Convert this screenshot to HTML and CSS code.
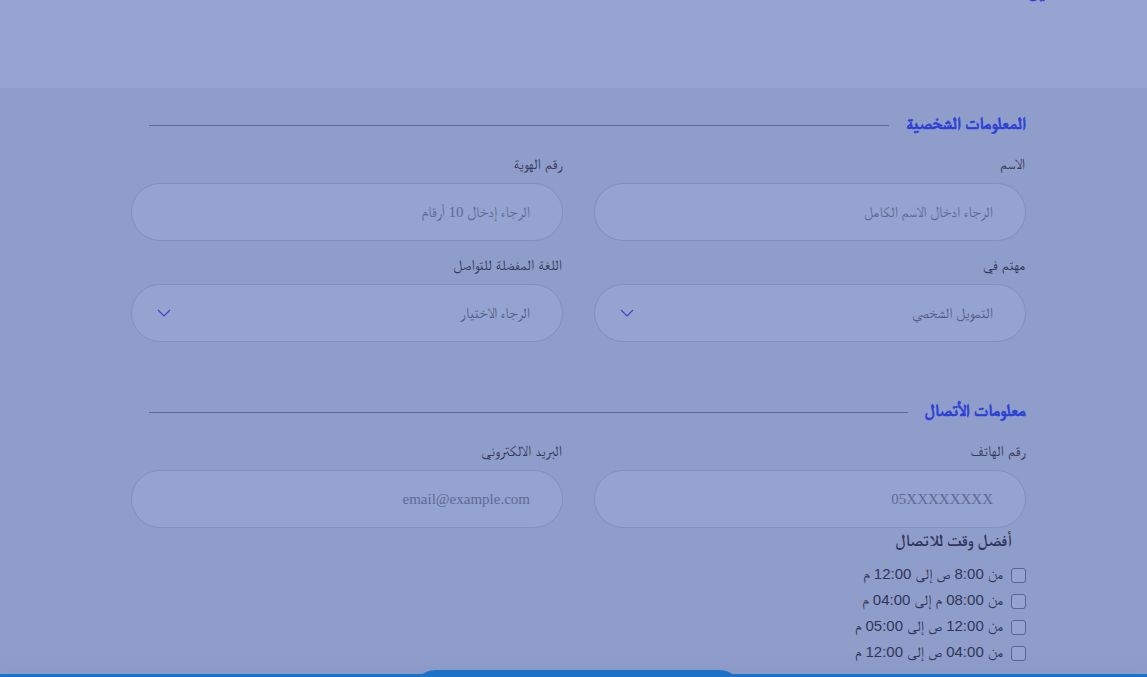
FILE: index.html
```html
<!DOCTYPE html>
<html lang="ar" dir="rtl">
<head>
    <meta charset="utf-8">
    <title>طلب تمويل</title>
    <link rel="stylesheet" href="styles.css">
</head>
<body>
<header class="top">
    <h1 class="top-title">التسجيل</h1>
</header>
<main class="form-wrap">
    <section class="group">
        <div class="group-head"><h2>المعلومات الشخصية</h2><span class="rule"></span></div>
        <div class="grid">
            <div class="field">
                <label for="fullName">الاسم</label>
                <input type="text" id="fullName" class="input" placeholder="الرجاء ادخال الاسم الكامل">
            </div>
            <div class="field">
                <label for="idNo">رقم الهوية</label>
                <input type="text" id="idNo" class="input" placeholder="الرجاء إدخال 10 أرقام">
            </div>
            <div class="field">
                <label>مهتم في</label>
                <div class="select">
                    <span class="select-text">التمويل الشخصي</span>
                    <svg class="chev" width="14" height="8" viewBox="0 0 14 8"><path d="M1 1l6 6 6-6" fill="none" stroke="currentColor" stroke-width="1.2"/></svg>
                </div>
            </div>
            <div class="field">
                <label>اللغة المفضلة للتواصل</label>
                <div class="select">
                    <span class="select-text">الرجاء الاختيار</span>
                    <svg class="chev" width="14" height="8" viewBox="0 0 14 8"><path d="M1 1l6 6 6-6" fill="none" stroke="currentColor" stroke-width="1.2"/></svg>
                </div>
            </div>
        </div>
    </section>

    <section class="group group-contact">
        <div class="group-head"><h2>معلومات الأتصال</h2><span class="rule"></span></div>
        <div class="grid">
            <div class="field">
                <label for="phone">رقم الهاتف</label>
                <input type="text" id="phone" class="input" placeholder="05XXXXXXXX">
            </div>
            <div class="field">
                <label for="email">البريد الالكتروني</label>
                <input type="text" id="email" class="input" placeholder="email@example.com">
            </div>
        </div>
        <div class="times">
            <div class="times-title">أفضل وقت للاتصال</div>
            <label class="check"><span class="box"></span>من 8:00 ص إلى 12:00 م</label>
            <label class="check"><span class="box"></span>من 08:00 م إلى 04:00 م</label>
            <label class="check"><span class="box"></span>من 12:00 ص إلى 05:00 م</label>
            <label class="check"><span class="box"></span>من 04:00 ص إلى 12:00 م</label>
        </div>
    </section>
</main>
<footer class="bottom">
    <button type="button" class="btn-send">إرسال</button>
</footer>
</body>
</html>
```

FILE: styles.css
```css
html,body{margin:0;padding:0;}
body{background:#8f9dca;font-family:"Liberation Sans","FreeSerif",sans-serif;color:#3b4163;height:677px;overflow:hidden;}
.top{height:88px;background:#95a4d0;overflow:hidden;}
.top-title{margin:-20px 0 0 1028px;font-family:"Liberation Serif","FreeSerif",serif;font-size:18px;line-height:22px;color:#2c3fd6;font-weight:bold;text-align:left;white-space:nowrap;-webkit-text-stroke:.5px #2c3fd6;}

.form-wrap{padding:0 121px 0 131px;}
.group{padding-top:26px;}
.group-contact{padding-top:59px;}
.group-head{display:flex;align-items:center;gap:17px;padding-left:18px;}
.group-head h2{margin:0;font-family:"Liberation Serif","FreeSerif",serif;font-size:17px;line-height:20px;font-weight:bold;color:#2c3fd6;white-space:nowrap;-webkit-text-stroke:.6px #2c3fd6;}
.group-head .rule{flex:1;height:1px;background:#5d6a99;margin-top:2px;}

.grid{display:grid;grid-template-columns:1fr 1fr;column-gap:31px;row-gap:15px;margin-top:21px;}
.field label{display:block;font-size:15px;line-height:18px;margin-bottom:10px;padding-right:1px;color:#353a5a;}
.input,.select{box-sizing:border-box;width:100%;height:58px;border:1px solid #8290c0;border-radius:29px;background:#94a3cf;padding:0 32px;font-family:"Liberation Serif","FreeSerif",serif;font-size:15px;color:#5f6a94;outline:none;}
.input::placeholder{color:#5f6a94;}
.select{display:flex;align-items:center;justify-content:space-between;}
.select-text{color:#545e88;}
.chev{color:#3a49c8;margin-left:-7px;}

.times{padding-right:15px;margin-top:3px;}
.times-title{font-family:"Liberation Serif","FreeSerif",serif;font-size:17px;font-weight:bold;line-height:20px;color:#30365a;margin-bottom:10px;}
.check{display:flex;align-items:center;gap:8px;height:26px;font-size:15px;color:#30365a;margin-right:-15px;}
.check .box{box-sizing:border-box;width:15px;height:15px;border:1px solid #5a6590;border-radius:3px;background:#95a3cf;margin-top:2px;}

.bottom{position:fixed;left:0;right:0;bottom:0;height:3px;background:#1c72c6;box-shadow:0 -6px 12px rgba(110,125,180,.35);}
.btn-send{position:absolute;left:415px;top:-4px;width:325px;height:40px;border:0;border-radius:20px;background:#1c72c6;color:#fff;font-family:inherit;font-size:16px;}
```
